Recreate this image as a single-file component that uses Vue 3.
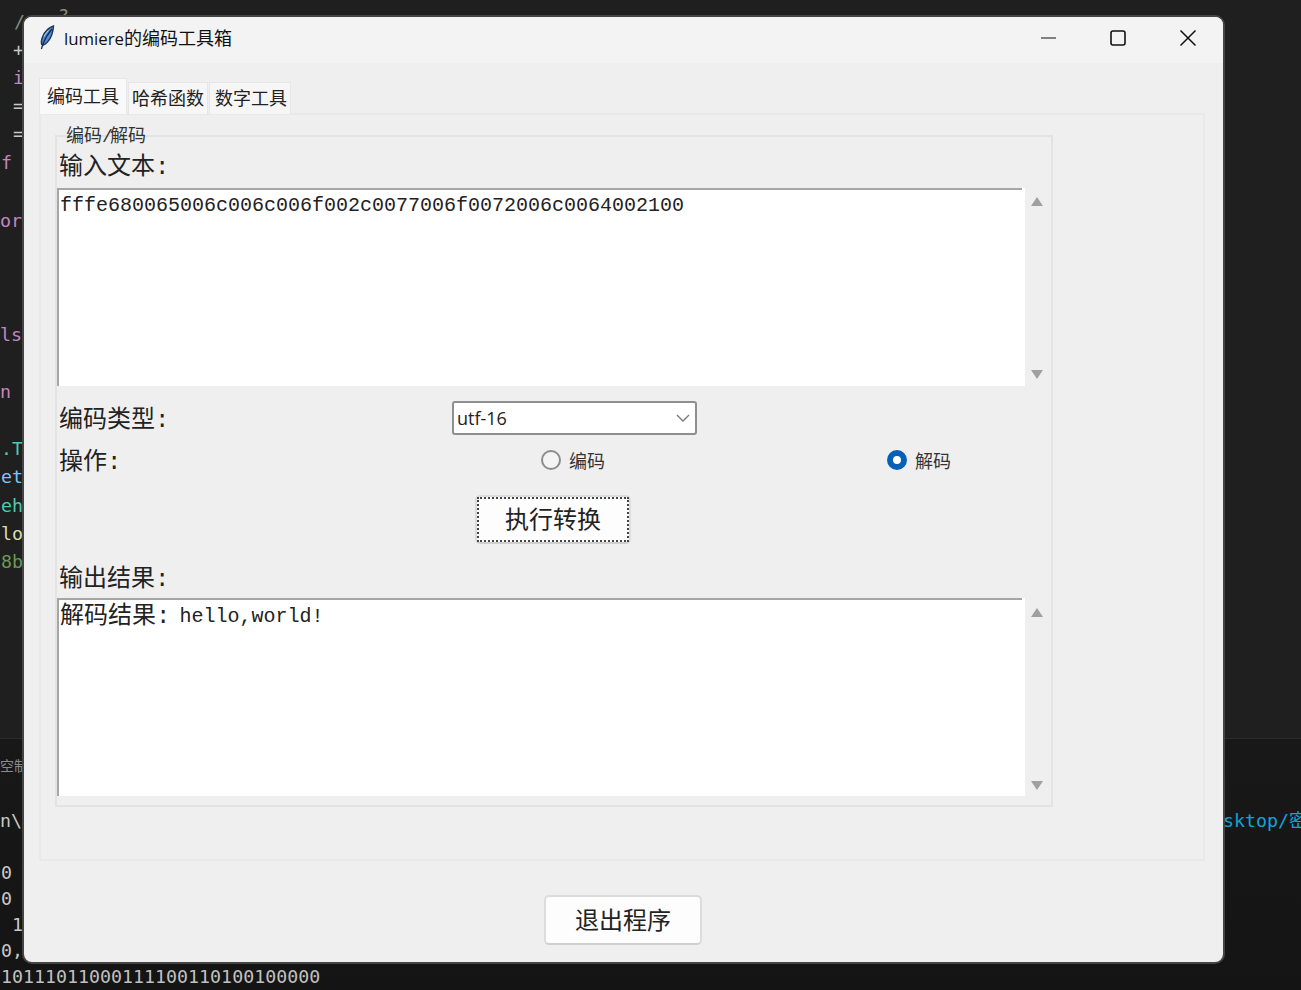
<script setup>
const fragments = [
  { text: '//', x: 14, y: 10, color: '#7f8f7a' },
  { text: '?', x: 58, y: 4, color: '#8a8a7a' },
  { text: '+', x: 13, y: 38, color: '#c8c8c8' },
  { text: 'i', x: 13, y: 66, color: '#c586c0' },
  { text: '=', x: 13, y: 94, color: '#c8c8c8' },
  { text: '=', x: 13, y: 122, color: '#c8c8c8' },
  { text: 'f', x: 1, y: 151, color: '#c586c0' },
  { text: 'or', x: 0, y: 209, color: '#c586c0' },
  { text: 'ls', x: 0, y: 323, color: '#c586c0' },
  { text: 'n', x: 0, y: 380, color: '#c586c0' },
  { text: '.T', x: 1, y: 437, color: '#4ec9b0' },
  { text: 'et', x: 1, y: 465, color: '#7cc4f5' },
  { text: 'eh', x: 1, y: 494, color: '#4ec9b0' },
  { text: 'lo', x: 1, y: 522, color: '#dcdcaa' },
  { text: '8b', x: 1, y: 550, color: '#6a9955' },
  { text: 'n\\', x: 0, y: 809, color: '#c8c8c8' },
  { text: '0', x: 1, y: 861, color: '#c8c8c8' },
  { text: '0', x: 1, y: 887, color: '#c8c8c8' },
  { text: '1', x: 12, y: 913, color: '#c8c8c8' },
  { text: '0,', x: 1, y: 939, color: '#c8c8c8' },
  { text: '10111011000111100110100100000', x: 1, y: 965, color: '#c0c0c0' },
  { text: 'sktop/密', x: 1223, y: 809, color: '#0ea5d8' },
]
</script>

<template>
  <div class="desktop">
    <div class="panel-line"></div>
    <span
      v-for="f in fragments"
      :key="f.text + f.y + f.x"
      class="fragment"
      :style="{ left: f.x + 'px', top: f.y + 'px', color: f.color }"
    >{{ f.text }}</span>
    <span class="fragment small">空制</span>

    <div class="window">
      <header class="titlebar">
        <svg class="app-icon" viewBox="0 0 18 26" width="18" height="26">
          <path d="M15.500 1C11 2.500 6.500 7 4.500 12c-1.200 3-1.500 5.500-.8 7.500l2 .5c3.500-2 6.300-5.500 8-10 1-3 1.800-6 1.800-9z" fill="#4a8fe0" stroke="#24364e" stroke-width="1.400" />
          <path d="M14 4C10.500 8 7 13.500 5 19l-1.600 5" fill="none" stroke="#1a2c46" stroke-width="1.300" />
          <path d="M6 11.500c1-2 2.500-4 4.500-6" fill="none" stroke="#a9cdf2" stroke-width="1" />
        </svg>
        <span class="title">lumiere<span class="cjk">的编码工具箱</span></span>
        <div class="controls">
          <svg width="70" height="46" viewBox="0 0 70 46"><path d="M28 23h15" stroke="#111" stroke-width="1.200" /></svg>
          <svg width="70" height="46" viewBox="0 0 70 46"><rect x="28" y="16" width="14" height="14" rx="2" fill="none" stroke="#111" stroke-width="1.600" /></svg>
          <svg width="70" height="46" viewBox="0 0 70 46"><path d="M27.500 15.500l15 15M42.500 15.500l-15 15" stroke="#111" stroke-width="1.500" fill="none" /></svg>
        </div>
      </header>

      <main class="content">
        <div class="tabs">
          <span class="tab active">编码工具</span>
          <span class="tab">哈希函数</span>
          <span class="tab last">数字工具</span>
        </div>
        <section class="pane">
          <fieldset class="frame">
            <legend>编码<span class="slash">/</span>解码</legend>
            <div class="label first">输入文本:</div>
            <div class="text-row">
              <div class="textbox mono">fffe680065006c006c006f002c0077006f0072006c0064002100</div>
              <div class="scroll"><i class="up"></i><i class="down"></i></div>
            </div>
            <div class="type-row">
              <div class="label shifted type-label">编码类型:</div>
              <div class="combo">
                <span>utf-16</span>
                <svg width="14" height="8" viewBox="0 0 14 8"><path d="M1 1l6 6 6-6" fill="none" stroke="#777" stroke-width="1.300" /></svg>
              </div>
            </div>
            <div class="op-row">
              <div class="label shifted op-label">操作:</div>
              <label class="radio"><i class="dot"></i>编码</label>
              <label class="radio second"><i class="dot on"></i>解码</label>
            </div>
            <div class="run-row">
              <button class="btn run"><span class="focus">执行转换</span></button>
            </div>
            <div class="label output-label">输出结果:</div>
            <div class="text-row">
              <div class="textbox mono result"><span class="big">解码结果<span class="colon">:</span></span> hello,world!</div>
              <div class="scroll lower"><i class="up"></i><i class="down"></i></div>
            </div>
          </fieldset>
        </section>
        <div class="exit-row">
          <button class="btn exit">退出程序</button>
        </div>
      </main>
    </div>
  </div>
</template>

<style>
html, body { margin: 0; background: #1e1e1e; }
</style>

<style scoped>
.desktop {
  position: relative;
  width: 1301px;
  height: 990px;
  overflow: hidden;
  background: linear-gradient(#1f1f1f 0, #1f1f1f 738px, #181818 739px, #141414 100%);
  font-family: "Liberation Mono", "Noto Sans CJK SC", monospace;
  color: #111;
}
.panel-line {
  position: absolute;
  left: 0;
  right: 0;
  top: 738px;
  height: 1px;
  background: #2b2b2b;
}
.fragment {
  position: absolute;
  font-family: "DejaVu Sans Mono", "Noto Sans CJK SC", monospace;
  font-size: 18.3px;
  line-height: 24px;
  white-space: pre;
}
.small {
  left: 0;
  top: 753px;
  font-size: 14px;
  color: #8a8a8a;
  font-family: "Noto Sans CJK SC", sans-serif;
}
.window {
  position: absolute;
  left: 22px;
  top: 15px;
  width: 1199px;
  height: 945px;
  border: 2px solid #444;
  border-radius: 10px;
  overflow: hidden;
  background: #efefef;
  display: flex;
  flex-direction: column;
}
.titlebar {
  box-sizing: border-box;
  height: 46px;
  background: #f3f3f3;
  display: flex;
  align-items: flex-start;
  padding-left: 14px;
  flex: none;
}
.app-icon { margin: 8px 8px 0 0; }
.title {
  font-family: "Open Sans", "Noto Sans CJK SC", sans-serif;
  font-size: 16.800px;
  line-height: 40px;
  color: #111;
}
.cjk {
  font-family: "Noto Sans CJK SC", sans-serif;
  font-size: 18px;
}
.controls {
  margin-left: auto;
  margin-top: -2px;
  display: flex;
}
.content {
  flex: 1;
  padding: 15px 18px 0 15px;
}
.tabs {
  display: flex;
  align-items: flex-end;
  height: 36px;
  gap: 1px;
  position: relative;
  z-index: 1;
}
.tab {
  font-family: "Noto Sans CJK SC", sans-serif;
  font-size: 18px;
  line-height: 28px;
  height: 32px;
  padding: 0 3px;
  background: #f6f6f6;
  color: #222;
  border: 1px solid #e6e6e6;
  border-bottom: 0;
  box-sizing: border-box;
}
.tab.last { padding-left: 5px; }
.tab.active {
  height: 36px;
  line-height: 32px;
  padding: 0 7px;
  background: #f9f9f9;
}
.pane {
  box-sizing: border-box;
  height: 748px;
  margin-top: -1px;
  border: 2px solid #e9e9e9;
  padding: 9px 150px 0 14px;
}
.frame {
  box-sizing: border-box;
  height: 672px;
  margin: 11px 0 0;
  border: 2px solid #e3e3e3;
  padding: 0;
  position: relative;
}
legend {
  font-family: "Liberation Mono", "Noto Sans CJK SC", monospace;
  font-size: 18px;
  line-height: 20px;
  color: #333;
  padding: 0;
  margin-left: 9px;
  position: absolute;
  top: -10px;
}
.slash { letter-spacing: -2.800px; }
.label {
  font-size: 24px;
  line-height: 28px;
  height: 28px;
  padding-left: 2px;
  color: #222;
  font-family: "Liberation Mono", "Noto Sans CJK SC", monospace;
}
.first { margin-top: 17px; }
.shifted { padding-top: 6px; }
.text-row {
  display: flex;
  height: 198px;
  margin-top: 6px;
}
.textbox {
  box-sizing: border-box;
  width: 968px;
  background: linear-gradient(#a6a6a6, #a6a6a6) 0 0 / 963px 2px no-repeat, #fff;
  border-left: 2px solid #a6a6a6;
  padding: 4px 0 0 1px;
  white-space: pre;
}
.mono {
  font-family: "Liberation Mono", "Noto Sans CJK SC", monospace;
  font-size: 20px;
  line-height: 28px;
  color: #222;
}
.result { padding-top: 5px; }
.big { font-size: 24px; line-height: 20px; position: relative; top: 1px; }
.colon { letter-spacing: -3px; }
.scroll {
  flex: 1;
  position: relative;
  display: flex;
  flex-direction: column;
  align-items: flex-start;
  justify-content: space-between;
  padding: 9px 0 7px 6px;
}
.scroll.lower { padding: 10px 0 6px 6px; }
.scroll i {
  display: block;
  width: 0;
  height: 0;
  border-left: 6.500px solid transparent;
  border-right: 6.500px solid transparent;
}
.up { border-bottom: 9px solid #a0a0a0; }
.down { border-top: 9px solid #a0a0a0; }
.type-row {
  display: flex;
  align-items: center;
  margin-top: 15px;
  height: 34px;
}
.type-label { width: 393px; flex: none; }
.combo {
  box-sizing: border-box;
  width: 245px;
  height: 34px;
  background: #fff;
  border: 2px solid #8f8f8f;
  border-radius: 3px;
  display: flex;
  align-items: center;
  justify-content: space-between;
  padding: 0 5px 0 3px;
  font-family: "Open Sans", sans-serif;
  font-size: 18px;
  color: #222;
}
.op-row {
  display: flex;
  align-items: center;
  height: 32px;
  margin-top: 9px;
}
.op-label { width: 482px; flex: none; }
.radio {
  display: flex;
  align-items: center;
  gap: 8px;
  font-family: "Noto Sans CJK SC", sans-serif;
  font-size: 18px;
  color: #333;
}
.second { margin-left: 282px; }
.dot {
  box-sizing: border-box;
  width: 20px;
  height: 20px;
  border-radius: 50%;
  border: 2px solid #8c8c8c;
  background: #f4f4f4;
}
.dot.on {
  border: 6px solid #0560b6;
  background: #fff;
}
.run-row {
  display: flex;
  margin-top: 19px;
  padding-left: 418px;
}
.btn {
  box-sizing: border-box;
  font-family: "Noto Sans CJK SC", sans-serif;
  font-size: 24px;
  color: #222;
  background: #fdfdfd;
  border: 2px solid #dcdcdc;
  border-bottom-color: #cfcfcf;
  border-radius: 5px;
  padding: 0;
}
.run {
  width: 156px;
  height: 49px;
  padding: 0;
  border-width: 2px;
}
.focus {
  display: flex;
  align-items: center;
  justify-content: center;
  box-sizing: border-box;
  height: 100%;
  padding-bottom: 5px;
  border: 2px dotted #444;
}
.output-label { margin-top: 22px; margin-bottom: -2px; }
.exit-row {
  display: flex;
  padding-left: 505px;
  margin-top: 34px;
}
.exit {
  width: 158px;
  height: 50px;
  padding-bottom: 3px;
}
</style>
